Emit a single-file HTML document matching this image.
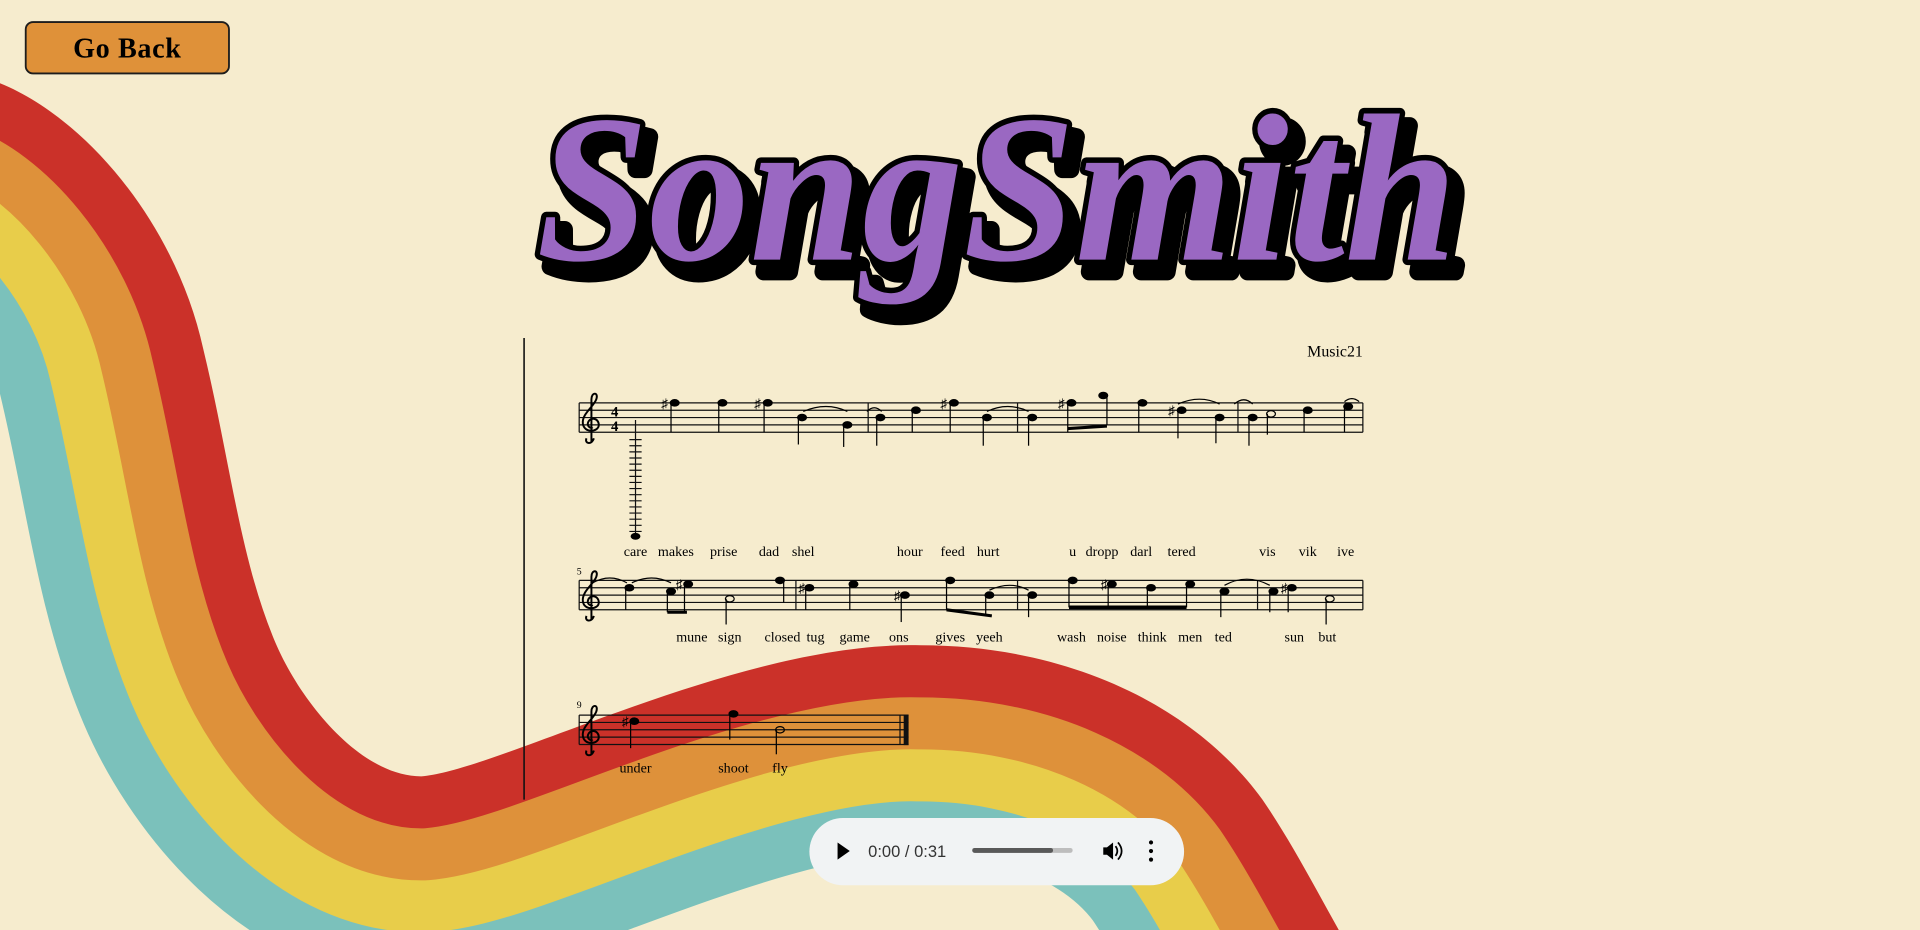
<!DOCTYPE html>
<html><head><meta charset="utf-8"><style>
html,body{margin:0;padding:0;background:#f6ecce;width:1920px;height:930px;overflow:hidden}
svg{display:block;position:absolute;left:0;top:0}
</style></head><body>
<svg width="1920" height="930" viewBox="0 0 1568 759.5" preserveAspectRatio="none" xmlns="http://www.w3.org/2000/svg">
<rect width="1568" height="760" fill="#f6ecce"/>
<defs>
<path id="edge" d="M-8 65 C65 90,143 180,166 285 C188 376,196 457,225 525 C245 572,294 634,344 634 C408 629,605 523,752 527 C866 527,972 572,1031 653 C1070 710,1100 780,1143 840"/>
<g id="clef"><path d="M8 30 C6 36,0 34,2 30 M6 33 L6 -2 C6 -8,12 -8,10 -2 C8 4,-2 10,-1 18 C0 26,12 25,12 19 C12 13,4 12,3 18 C3 21,6 22,7 21" fill="none" stroke="#000" stroke-width="1.6"/></g>
</defs>
<g fill="none" stroke-linejoin="round">
<use href="#edge" stroke="#7bc1bb" stroke-width="340"/>
<use href="#edge" stroke="#e8cd4a" stroke-width="255"/>
<use href="#edge" stroke="#de913a" stroke-width="170"/>
<use href="#edge" stroke="#cb3129" stroke-width="85"/>
</g>
<path d="M-8 65 C65 90,143 180,166 285 C188 376,196 457,225 525 C245 572,294 634,344 634 C408 629,605 523,752 527 C866 527,972 572,1031 653 C1070 710,1100 780,1143 840 L1600 840 L1600 -20 L-20 -20 L-20 65 Z" fill="#f6ecce"/>

<!-- Go Back -->
<rect x="21" y="18" width="166" height="42" rx="6" fill="#df9139" stroke="#1d1d1d" stroke-width="1.5"/>
<text x="104" y="47" text-anchor="middle" font-family="Liberation Serif, serif" font-weight="bold" font-size="23" letter-spacing="0.5" fill="#000">Go Back</text>

<!-- Title -->
<g font-family="Liberation Serif, serif" font-weight="bold" font-style="italic" font-size="172">
<text x="446" y="222" textLength="752" lengthAdjust="spacingAndGlyphs" fill="#000" stroke="#000" stroke-width="14" stroke-linejoin="round">SongSmith</text>
<text x="438" y="212" textLength="752" lengthAdjust="spacingAndGlyphs" fill="#9a68c2" stroke="#000" stroke-width="9" stroke-linejoin="round" paint-order="stroke">SongSmith</text>
</g>

<line x1="428" y1="276" x2="428" y2="653" stroke="#111" stroke-width="1.3"/>
<text x="1113" y="291" text-anchor="end" font-family="Liberation Serif, serif" font-size="13">Music21</text>

<g stroke="#111" stroke-width="1">
<path d="M473 329H1113M473 335H1113M473 341H1113M473 347H1113M473 353H1113"/>
<path d="M473 329V353M709 329V353M831 329V353M1011 329V353M1113 329V353"/>
<path d="M473 474H1113M473 480H1113M473 486H1113M473 492H1113M473 498H1113"/>
<path d="M473 474V498M650 474V498M831 474V498M1027 474V498M1113 474V498"/>
<path d="M473 584H742M473 590H742M473 596H742M473 602H742M473 608H742"/>
<path d="M473 584V608"/>
</g>
<rect x="738" y="584" width="4" height="24.5" fill="#111"/>
<line x1="735" y1="584" x2="735" y2="608" stroke="#111"/>
<use href="#clef" x="477" y="328"/>
<use href="#clef" x="477" y="473"/>
<use href="#clef" x="477" y="583"/>
<text x="499" y="340" font-family="Liberation Serif, serif" font-weight="bold" font-size="12">4</text>
<text x="499" y="352" font-family="Liberation Serif, serif" font-weight="bold" font-size="12">4</text>
<text x="471" y="469" font-family="Liberation Serif, serif" font-size="8">5</text>
<text x="471" y="578" font-family="Liberation Serif, serif" font-size="8">9</text>

<g stroke="#111" stroke-width="1">
<line x1="519" y1="343" x2="519" y2="440"/>
<path d="M514 359h10M514 364h10M514 369h10M514 374h10M514 379h10M514 384h10M514 389h10M514 394h10M514 399h10M514 404h10M514 409h10M514 414h10M514 419h10M514 424h10M514 429h10M514 434h10"/>
</g>
<ellipse cx="519" cy="438" rx="4" ry="2.8" fill="#000"/>

<g fill="#000" stroke="#000" stroke-width="1">
<ellipse cx="551" cy="329" rx="3.6" ry="2.6"/><line x1="548" y1="329" x2="548" y2="353"/>
<ellipse cx="590" cy="329" rx="3.6" ry="2.6"/><line x1="587" y1="329" x2="587" y2="353"/>
<ellipse cx="627" cy="329" rx="3.6" ry="2.6"/><line x1="624" y1="329" x2="624" y2="353"/>
<ellipse cx="655" cy="341" rx="3.6" ry="2.6"/><line x1="652" y1="341" x2="652" y2="363"/>
<ellipse cx="692" cy="347" rx="3.6" ry="2.6"/><line x1="689" y1="347" x2="689" y2="365"/>
<ellipse cx="719" cy="341" rx="3.6" ry="2.6"/><line x1="716" y1="341" x2="716" y2="364"/>
<ellipse cx="748" cy="335" rx="3.6" ry="2.6"/><line x1="745" y1="335" x2="745" y2="353"/>
<ellipse cx="779" cy="329" rx="3.6" ry="2.6"/><line x1="776" y1="329" x2="776" y2="353"/>
<ellipse cx="806" cy="341" rx="3.6" ry="2.6"/><line x1="803" y1="341" x2="803" y2="364"/>
<ellipse cx="843" cy="341" rx="3.6" ry="2.6"/><line x1="840" y1="341" x2="840" y2="364"/>
<ellipse cx="875" cy="329" rx="3.6" ry="2.6"/><line x1="872" y1="329" x2="872" y2="353"/>
<ellipse cx="901" cy="323" rx="3.6" ry="2.6"/><line x1="904" y1="323" x2="904" y2="347"/>
<line x1="872" y1="350" x2="904" y2="348" stroke-width="2.5"/>
<ellipse cx="933" cy="329" rx="3.6" ry="2.6"/><line x1="930" y1="329" x2="930" y2="353"/>
<ellipse cx="965" cy="335" rx="3.6" ry="2.6"/><line x1="962" y1="335" x2="962" y2="358"/>
<ellipse cx="996" cy="341" rx="3.6" ry="2.6"/><line x1="993" y1="341" x2="993" y2="362"/>
<ellipse cx="1023" cy="341" rx="3.6" ry="2.6"/><line x1="1020" y1="341" x2="1020" y2="364"/>
<ellipse cx="1068" cy="335" rx="3.6" ry="2.6"/><line x1="1065" y1="335" x2="1065" y2="353"/>
<ellipse cx="1101" cy="332" rx="3.6" ry="2.6"/><line x1="1098" y1="332" x2="1098" y2="353"/>
<ellipse cx="1038" cy="338" rx="3.6" ry="2.6" fill="none"/><line x1="1035" y1="338" x2="1035" y2="355"/>
<ellipse cx="514" cy="480" rx="3.6" ry="2.6"/><line x1="511" y1="480" x2="511" y2="498"/>
<ellipse cx="548" cy="483" rx="3.6" ry="2.6"/><line x1="545" y1="483" x2="545" y2="500"/>
<ellipse cx="562" cy="477" rx="3.6" ry="2.6"/><line x1="559" y1="477" x2="559" y2="500"/>
<line x1="545" y1="500" x2="561" y2="500" stroke-width="2.5"/>
<ellipse cx="596" cy="489" rx="3.6" ry="2.6" fill="none"/><line x1="593" y1="489" x2="593" y2="510"/>
<ellipse cx="637" cy="474" rx="3.6" ry="2.6"/><line x1="640" y1="474" x2="640" y2="492"/>
<ellipse cx="661" cy="480" rx="3.6" ry="2.6"/><line x1="658" y1="480" x2="658" y2="498"/>
<ellipse cx="697" cy="477" rx="3.6" ry="2.6"/><line x1="694" y1="477" x2="694" y2="498"/>
<ellipse cx="739" cy="486" rx="3.6" ry="2.6"/><line x1="736" y1="486" x2="736" y2="508"/>
<ellipse cx="776" cy="474" rx="3.6" ry="2.6"/><line x1="773" y1="474" x2="773" y2="498"/>
<line x1="773" y1="498" x2="810" y2="503" stroke-width="2.5"/>
<ellipse cx="808" cy="486" rx="3.6" ry="2.6"/><line x1="805" y1="486" x2="805" y2="503"/>
<ellipse cx="843" cy="486" rx="3.6" ry="2.6"/><line x1="840" y1="486" x2="840" y2="504"/>
<ellipse cx="876" cy="474" rx="3.6" ry="2.6"/><line x1="873" y1="474" x2="873" y2="496"/>
<ellipse cx="908" cy="477" rx="3.6" ry="2.6"/><line x1="905" y1="477" x2="905" y2="496"/>
<ellipse cx="940" cy="480" rx="3.6" ry="2.6"/><line x1="937" y1="480" x2="937" y2="496"/>
<ellipse cx="972" cy="477" rx="3.6" ry="2.6"/><line x1="969" y1="477" x2="969" y2="496"/>
<line x1="873" y1="496" x2="969" y2="496" stroke-width="3"/>
<ellipse cx="1000" cy="483" rx="3.6" ry="2.6"/><line x1="997" y1="483" x2="997" y2="504"/>
<ellipse cx="1040" cy="483" rx="3.6" ry="2.6"/><line x1="1037" y1="483" x2="1037" y2="500"/>
<ellipse cx="1055" cy="480" rx="3.6" ry="2.6"/><line x1="1052" y1="480" x2="1052" y2="500"/>
<ellipse cx="1086" cy="489" rx="3.6" ry="2.6" fill="none"/><line x1="1083" y1="489" x2="1083" y2="510"/>
<ellipse cx="518" cy="589" rx="3.6" ry="2.6"/><line x1="515" y1="589" x2="515" y2="611"/>
<ellipse cx="599" cy="583" rx="3.6" ry="2.6"/><line x1="596" y1="583" x2="596" y2="604"/>
<ellipse cx="637" cy="596" rx="3.6" ry="2.6" fill="none"/><line x1="634" y1="596" x2="634" y2="616"/>
</g>
<g font-family="Liberation Serif, serif" font-size="11" fill="#000">
<text x="540" y="333">♯</text><text x="616" y="333">♯</text><text x="768" y="333">♯</text><text x="864" y="333">♯</text><text x="954" y="339">♯</text>
<text x="552" y="481">♯</text><text x="652" y="484">♯</text><text x="730" y="490">♯</text><text x="899" y="481">♯</text><text x="1046" y="484">♯</text>
<text x="508" y="593">♯</text>
</g>
<g fill="none" stroke="#000" stroke-width="1">
<path d="M656 336 Q675 328 692 336"/><path d="M708 336 Q714 330 720 336"/><path d="M806 336 Q823 328 840 336"/>
<path d="M962 330 Q980 322 996 330"/><path d="M1008 330 Q1016 323 1023 330"/><path d="M1098 328 Q1104 323 1110 328"/>
<path d="M484 476 Q498 468 512 476"/><path d="M516 476 Q532 468 548 476"/><path d="M808 482 Q825 474 840 482"/><path d="M1000 478 Q1018 468 1037 478"/>
</g>

<g font-family="Liberation Serif, serif" font-size="11.5" text-anchor="middle" fill="#000">
<text x="519" y="454">care</text><text x="552" y="454">makes</text><text x="591" y="454">prise</text><text x="628" y="454">dad</text><text x="656" y="454">shel</text>
<text x="743" y="454">hour</text><text x="778" y="454">feed</text><text x="807" y="454">hurt</text><text x="876" y="454">u</text><text x="900" y="454">dropp</text><text x="932" y="454">darl</text><text x="965" y="454">tered</text>
<text x="1035" y="454">vis</text><text x="1068" y="454">vik</text><text x="1099" y="454">ive</text>
<text x="565" y="524">mune</text><text x="596" y="524">sign</text><text x="639" y="524">closed</text><text x="666" y="524">tug</text><text x="698" y="524">game</text><text x="734" y="524">ons</text>
<text x="776" y="524">gives</text><text x="808" y="524">yeeh</text><text x="875" y="524">wash</text><text x="908" y="524">noise</text><text x="941" y="524">think</text><text x="972" y="524">men</text><text x="999" y="524">ted</text>
<text x="1057" y="524">sun</text><text x="1084" y="524">but</text>
<text x="519" y="631">under</text><text x="599" y="631">shoot</text><text x="637" y="631">fly</text>
</g>

<rect x="661" y="668" width="306" height="55" rx="27.5" fill="#f1f3f4"/>
<path d="M684 688 L694 695 L684 702 Z" fill="#000"/>
<text x="709" y="700" font-family="Liberation Sans, sans-serif" font-size="13.5" fill="#333">0:00 / 0:31</text>
<rect x="794" y="692.5" width="82" height="4" rx="2" fill="#bdbdbd"/>
<rect x="794" y="692.5" width="66" height="4" rx="2" fill="#595959"/>
<path d="M901 692 h3 l5 -4 v14 l-5 -4 h-3 z" fill="#000"/>
<path d="M911 691 q3 4 0 8 M913 688 q6 7 0 14" fill="none" stroke="#000" stroke-width="1.4"/>
<circle cx="940" cy="688" r="1.7" fill="#000"/><circle cx="940" cy="695" r="1.7" fill="#000"/><circle cx="940" cy="702" r="1.7" fill="#000"/>
</svg>
</body></html>
